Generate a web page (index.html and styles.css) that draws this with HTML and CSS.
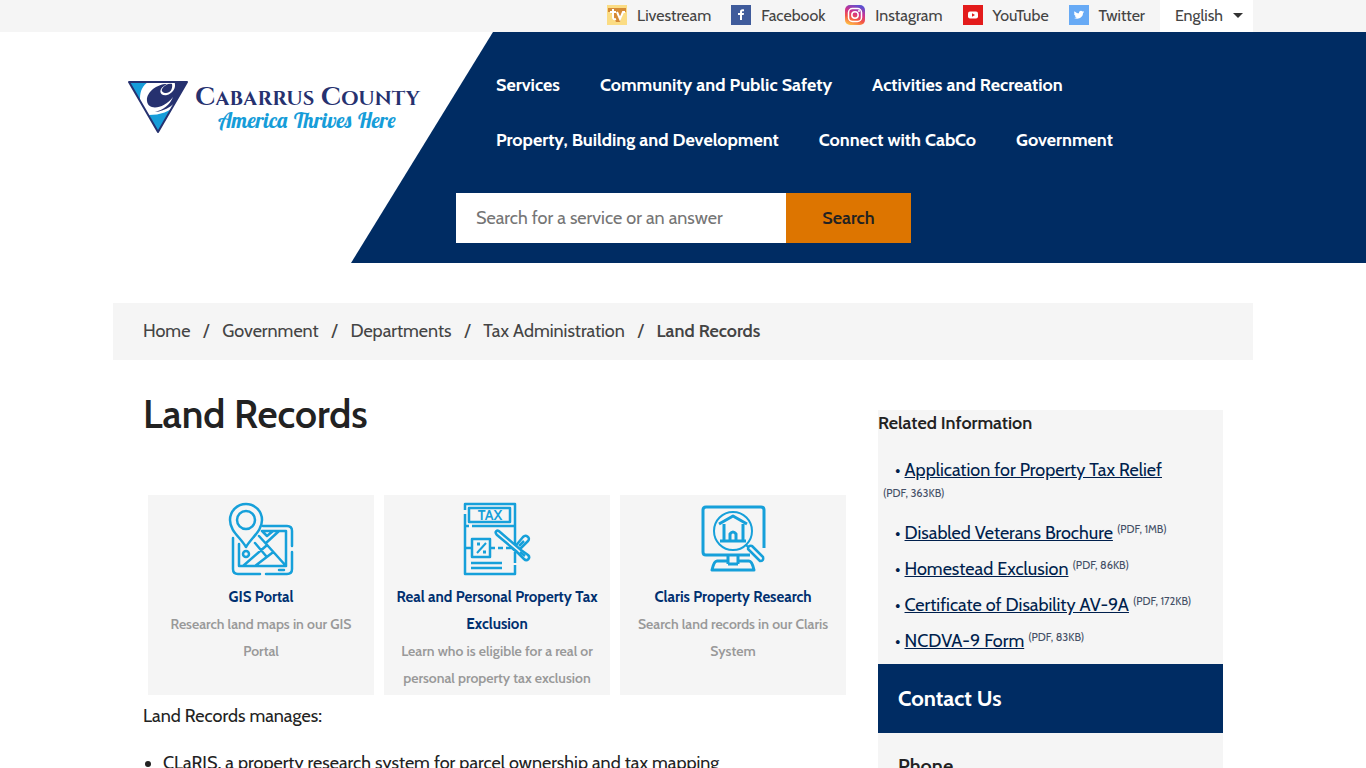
FILE: index.html
```html
<!DOCTYPE html>
<html lang="en">
<head>
    <meta charset="UTF-8">
    <meta name="viewport" content="width=device-width, initial-scale=1">
    <title>Land Records - Cabarrus County</title>
    <link rel="stylesheet" href="styles.css">
</head>
<body>
    <!-- Social links and language -->
    <div class="top-bar">
        <div class="container top-links">
            <a href="#">
                <svg width="20" height="20" viewBox="0 0 20 20">
                    <rect width="20" height="20" fill="#fbdc83"/>
                    <path d="M1 3h18v4h-3l-3 10H9L4 7H1z" fill="#d58a35"/>
                    <path d="M6 4v8q0 3 3 2M3 7h6M10 7l3 7 3-7h2" fill="none" stroke="#fff" stroke-width="2"/>
                </svg>
                Livestream
            </a>
            <a href="#">
                <svg width="20" height="20" viewBox="0 0 20 20">
                    <rect width="20" height="20" fill="#3f5b9b"/>
                    <path d="M9 15v-5H7V8h2V7c0-2 1-3 4-2.600v1.800h-1c-1 0-1 .4-1 1.800h2l-.3 2H11v5z" fill="#fff"/>
                </svg>
                Facebook
            </a>
            <a href="#">
                <svg width="20" height="20" viewBox="0 0 20 20">
                    <defs>
                        <linearGradient id="insta" x1="0.200" y1="1" x2="0.600" y2="0">
                            <stop offset="0" stop-color="#ffc648"/>
                            <stop offset="0.350" stop-color="#f45742"/>
                            <stop offset="0.650" stop-color="#cf318f"/>
                            <stop offset="1" stop-color="#5d4fd0"/>
                        </linearGradient>
                    </defs>
                    <rect width="20" height="20" rx="5" fill="url(#insta)"/>
                    <rect x="3.500" y="3.500" width="13" height="13" rx="4" fill="none" stroke="#fff" stroke-width="1.500"/>
                    <circle cx="10" cy="10" r="3.200" fill="none" stroke="#fff" stroke-width="1.500"/>
                    <circle cx="14" cy="6" r="1" fill="#fff"/>
                </svg>
                Instagram
            </a>
            <a href="#">
                <svg width="20" height="20" viewBox="0 0 20 20">
                    <rect width="20" height="20" fill="#e31b1b"/>
                    <rect x="5" y="6.500" width="10" height="7" rx="2" fill="#fff"/>
                    <path d="M9 8.300v3.400l3-1.700z" fill="#e31b1b"/>
                </svg>
                YouTube
            </a>
            <a href="#">
                <svg width="20" height="20" viewBox="0 0 20 20">
                    <rect width="20" height="20" fill="#67aaf5"/>
                    <path d="M5.500 6.200C6.700 7.500 8 8.200 10 8.300 9.600 6.300 12 5 13.500 6.500l1.500-.5-.8 1.300.9-.2-1.100 1.200c0 4-4.500 6.800-9 4.700 1.200 0 2-.3 2.700-.9-1-.1-1.700-.6-2-1.400h.9C5.600 10.200 5 9.500 5 8.500l.9.200C5 8 5 7.200 5.500 6.200z" fill="#fff"/>
                </svg>
                Twitter
            </a>
            <button class="language" type="button">English <span class="caret"></span></button>
        </div>
    </div>

    <header class="header">
        <a class="logo" href="#">
            <svg class="logo-mark" width="60" height="52" viewBox="0 0 60 52">
                <defs>
                    <clipPath id="mark"><path d="M1 1H59L30 51z"/></clipPath>
                </defs>
                <g clip-path="url(#mark)">
                    <rect width="60" height="52" fill="#fff"/>
                    <path d="M0 0H22C14 4 10 12 13 26L0 16z" fill="#169dd9"/>
                    <path d="M21 34C32 34 42 31 50 22L30 52z" fill="#169dd9"/>
                    <path d="M60 0H46C49 6 45 12 39 14C34 15 31 12 33 8C34 6 37 4 39 3C28 3 18 12 19 20C20 30 36 28 45 16C42 24 35 29 27 31C38 30 47 24 60 8z" fill="#26316f"/>
                    <path d="M34 8C36 4 41 2 44 3C45 8 42 12 38 12C35 12 33 10 34 8z" fill="#26316f"/>
                </g>
                <path d="M1 1H59L30 51z" fill="none" stroke="#26316f" stroke-width="2" stroke-linejoin="round"/>
            </svg>
            <span class="logo-text">
                <span class="logo-name">C<small>ABARRUS</small> C<small>OUNTY</small></span>
                <span class="logo-motto">America Thrives Here</span>
            </span>
        </a>
        <div class="banner">
            <nav class="main-nav">
                <a href="#">Services</a>
                <a href="#">Community and Public Safety</a>
                <a href="#">Activities and Recreation</a>
                <a href="#">Property, Building and Development</a>
                <a href="#">Connect with CabCo</a>
                <a href="#">Government</a>
            </nav>
            <form class="search" action="#">
                <input type="text" aria-label="Search" placeholder="Search for a service or an answer">
                <button type="submit">Search</button>
            </form>
        </div>
    </header>

    <div class="container">
        <nav class="breadcrumb">
            <a href="#">Home</a><span>/</span>
            <a href="#">Government</a><span>/</span>
            <a href="#">Departments</a><span>/</span>
            <a href="#">Tax Administration</a><span>/</span>
            <strong>Land Records</strong>
        </nav>

        <div class="columns">
            <main class="content">
                <h1>Land Records</h1>

                <div class="cards">
                    <a class="card" href="#">
                        <svg width="72" height="76" viewBox="0 0 72 76">
                            <g fill="none" stroke="#16a0da" stroke-width="2.500" stroke-linecap="round" stroke-linejoin="round">
                                <path d="M8 38v31q0 5 5 5h22M41 74h21q5 0 5-5V52M67 46V31q0-5-5-5H38"/>
                                <path d="M14 44v22h47V31H37M34 36l27 30M30 43l11 13M18 66l23-20M30 66l17-13M41 43l13-12M37 31l5 5 6-5M54 70h5"/>
                                <path d="M21 47C15 37 5 31 5 20a16 16 0 0 1 32 0c0 11-10 17-16 27z" fill="#f5f5f5"/>
                                <circle cx="21" cy="20" r="9"/>
                                <circle cx="21" cy="54" r="3"/>
                            </g>
                        </svg>
                        <span class="card-title">GIS Portal</span>
                        <span class="card-text">Research land maps in our GIS Portal</span>
                    </a>
                    <a class="card" href="#">
                        <svg width="72" height="76" viewBox="0 0 72 76">
                            <g fill="none" stroke="#16a0da" stroke-width="2.500" stroke-linejoin="round">
                                <path d="M4 10V4h50v40M4 14v60h50v-9M54 63V52M4 26h4M11 26h43"/>
                                <path d="M8 8h41v14H8zM11 39h18v18H11zM4 48h7M29 48h5M37 48h5M45 48h6M10 63h31M10 68h31"/>
                                <path d="M16 53l9-10" stroke-width="2"/>
                                <path d="M16 44h3M22 52h3" stroke-width="3"/>
                                <path d="M52 49l10-12c3-3 8 1 5 4L56 52z" fill="#f5f5f5"/>
                                <path d="M36 35c-3-3 0-6 3-3l21 18 7 5c3 3-1 7-4 4l-8-8z" fill="#f5f5f5"/>
                                <path d="M58 46l5-5M59 52l5 4"/>
                            </g>
                            <text x="29" y="20" class="tax-label">TAX</text>
                        </svg>
                        <span class="card-title">Real and Personal Property Tax Exclusion</span>
                        <span class="card-text">Learn who is eligible for a real or personal property tax exclusion</span>
                    </a>
                    <a class="card" href="#">
                        <svg width="72" height="76" viewBox="0 0 72 76">
                            <g fill="none" stroke="#16a0da" stroke-width="3" stroke-linejoin="round">
                                <path d="M53 55H9q-3 0-3-3V10q0-3 3-3h55q3 0 3 3v38M31 56v8M41 56v8M31 64h10"/>
                                <path d="M30 61H20q-3 0-5 9h42q-2-9-5-9H42"/>
                                <circle cx="36" cy="31" r="19" stroke-width="2"/>
                                <path d="M23 41h26M27 41V24M46 41V24M22 24l14-8 14 8M33 40v-6q3-4 6 0v6"/>
                                <path d="M49 45l4 4" stroke-width="2"/>
                                <path d="M51 49q0-4 4-3l11 11q1 4-3 4z" fill="#f5f5f5" stroke-width="2.500"/>
                            </g>
                        </svg>
                        <span class="card-title">Claris Property Research</span>
                        <span class="card-text">Search land records in our Claris System</span>
                    </a>
                </div>

                <p>Land Records manages:</p>
                <ul>
                    <li>CLaRIS, a property research system for parcel ownership and tax mapping</li>
                </ul>
            </main>

            <aside class="sidebar">
                <h2>Related Information</h2>
                <ul class="related">
                    <li><a href="#">Application for Property Tax Relief</a> <small class="below">(PDF, 363KB)</small></li>
                    <li><a href="#">Disabled Veterans Brochure</a> <small>(PDF, 1MB)</small></li>
                    <li><a href="#">Homestead Exclusion</a> <small>(PDF, 86KB)</small></li>
                    <li><a href="#">Certificate of Disability AV-9A</a> <small>(PDF, 172KB)</small></li>
                    <li><a href="#">NCDVA-9 Form</a> <small>(PDF, 83KB)</small></li>
                </ul>
                <h2 class="contact-title">Contact Us</h2>
                <div class="contact">
                    <h3>Phone</h3>
                </div>
            </aside>
        </div>
    </div>
</body>
</html>
```
FILE: styles.css
```css
* {
    box-sizing: border-box;
}

body {
    margin: 0;
    font-family: Cabin, Lato, sans-serif;
    font-size: 18px;
    line-height: 27px;
    color: #222;
    background-color: #fff;
}

a {
    color: inherit;
    text-decoration: none;
}

.container {
    max-width: 1140px;
    margin: 0 auto;
}

/* Top bar */
.top-bar {
    background-color: #f5f5f5;
}

.top-links {
    display: flex;
    justify-content: flex-end;
    height: 32px;
    gap: 20px;
    font-size: 16px;
    color: #444;
}

.top-links a {
    display: flex;
    align-items: center;
    gap: 10px;
    padding-bottom: 2px;
}

.language {
    display: flex;
    align-items: center;
    gap: 10px;
    margin-left: -5px;
    padding: 0 10px 2px 15px;
    border: none;
    background-color: #fff;
    font: inherit;
    color: #444;
}

.caret {
    border: 5px solid transparent;
    border-top-color: #333;
    border-bottom: none;
}

/* Header */
.header {
    display: flex;
}

.logo {
    display: flex;
    flex: none;
    align-items: flex-start;
    gap: 7px;
    width: calc(50% - 332px);
    padding-top: 49px;
    padding-left: calc(50% - 555px);
    white-space: nowrap;
}

.logo-mark {
    flex: none;
}

.logo-text {
    display: flex;
    flex-direction: column;
    align-items: center;
    padding-top: 6px;
}

.logo-name {
    font-family: "Cinzel", "Liberation Serif", serif;
    font-size: 26px;
    font-weight: 600;
    line-height: 22px;
    color: #26316f;
}

.logo-name small {
    font-size: 20px;
}

.logo-motto {
    font-family: "Lobster Two", "Lobster", "Liberation Serif", serif;
    font-size: 21px;
    font-style: italic;
    font-weight: bold;
    line-height: 20px;
    color: #169dd9;
}

.banner {
    flex: 1;
    padding: 26px calc(50% - 570px) 20px 105px;
    background-color: #002c63;
    clip-path: polygon(142px 0, 100% 0, 100% 100%, 0 100%);
}

.main-nav {
    display: flex;
    flex-wrap: wrap;
    margin-bottom: 25px;
    padding-left: 20px;
}

.main-nav a {
    padding: 14px 20px;
    color: #fff;
    font-weight: bold;
}

.search {
    display: flex;
}

.search input {
    width: 330px;
    height: 50px;
    padding: 0 20px;
    border: none;
    font: inherit;
    background-color: #fff;
}

.search input::placeholder {
    color: #757575;
}

.search button {
    width: 125px;
    border: none;
    background-color: #dd7500;
    color: #222;
    font: inherit;
    font-weight: 600;
}

/* Breadcrumb */
.breadcrumb {
    display: flex;
    margin-top: 40px;
    padding: 15px 30px;
    background-color: #f5f5f5;
    color: #444;
}

.breadcrumb span {
    padding: 0 13px;
}

.breadcrumb strong {
    font-weight: 600;
}

/* Page columns */
.columns {
    display: flex;
    align-items: flex-start;
    gap: 30px;
    padding: 0 30px;
}

.content {
    flex: 1;
}

h1 {
    margin: 30px 0 57px;
    font-size: 39px;
    font-weight: 600;
    line-height: 48px;
}

.cards {
    display: grid;
    grid-template-columns: repeat(3, 1fr);
    gap: 10px;
    padding: 0 2px 0 5px;
}

.card {
    display: flex;
    flex-direction: column;
    align-items: center;
    padding: 5px 10px 3px;
    background-color: #f5f5f5;
    text-align: center;
}

.card svg {
    margin-bottom: 8px;
}

.card-title {
    font-size: 15px;
    font-weight: bold;
    color: #003070;
}

.card-text {
    padding: 0 4px;
    font-size: 14px;
    font-weight: 600;
    color: #999;
}

.tax-label {
    font-size: 14px;
    font-weight: bold;
    text-anchor: middle;
    fill: #16a0da;
}

.content p {
    margin: 8px 0 20px;
}

.content ul {
    margin: 0;
    padding-left: 20px;
}

/* Sidebar */
.sidebar {
    width: 345px;
    margin-top: 50px;
    background-color: #f5f5f5;
}

.sidebar h2 {
    margin: 0;
    font-size: 18px;
    font-weight: 600;
}

.related {
    margin: 20px 0 0;
    padding: 0 5px;
    list-style: none;
    color: #001f4d;
}

.related li {
    margin-bottom: 9px;
}

.related li::before {
    content: "•";
    margin: 0 4px 0 12px;
}

.related a {
    text-decoration: underline;
}

.related small {
    font-size: 11px;
    line-height: 0;
    vertical-align: 6px;
    color: #444f66;
}

.related .below {
    display: block;
    padding-bottom: 9px;
    line-height: 18px;
}

.sidebar .contact-title {
    padding: 20px;
    background-color: #002c63;
    color: #fff;
    font-size: 22px;
    font-weight: bold;
    line-height: 29px;
}

.contact {
    padding: 20px;
}

.contact h3 {
    margin: 0;
    font-size: 20px;
    font-weight: 600;
}
```
